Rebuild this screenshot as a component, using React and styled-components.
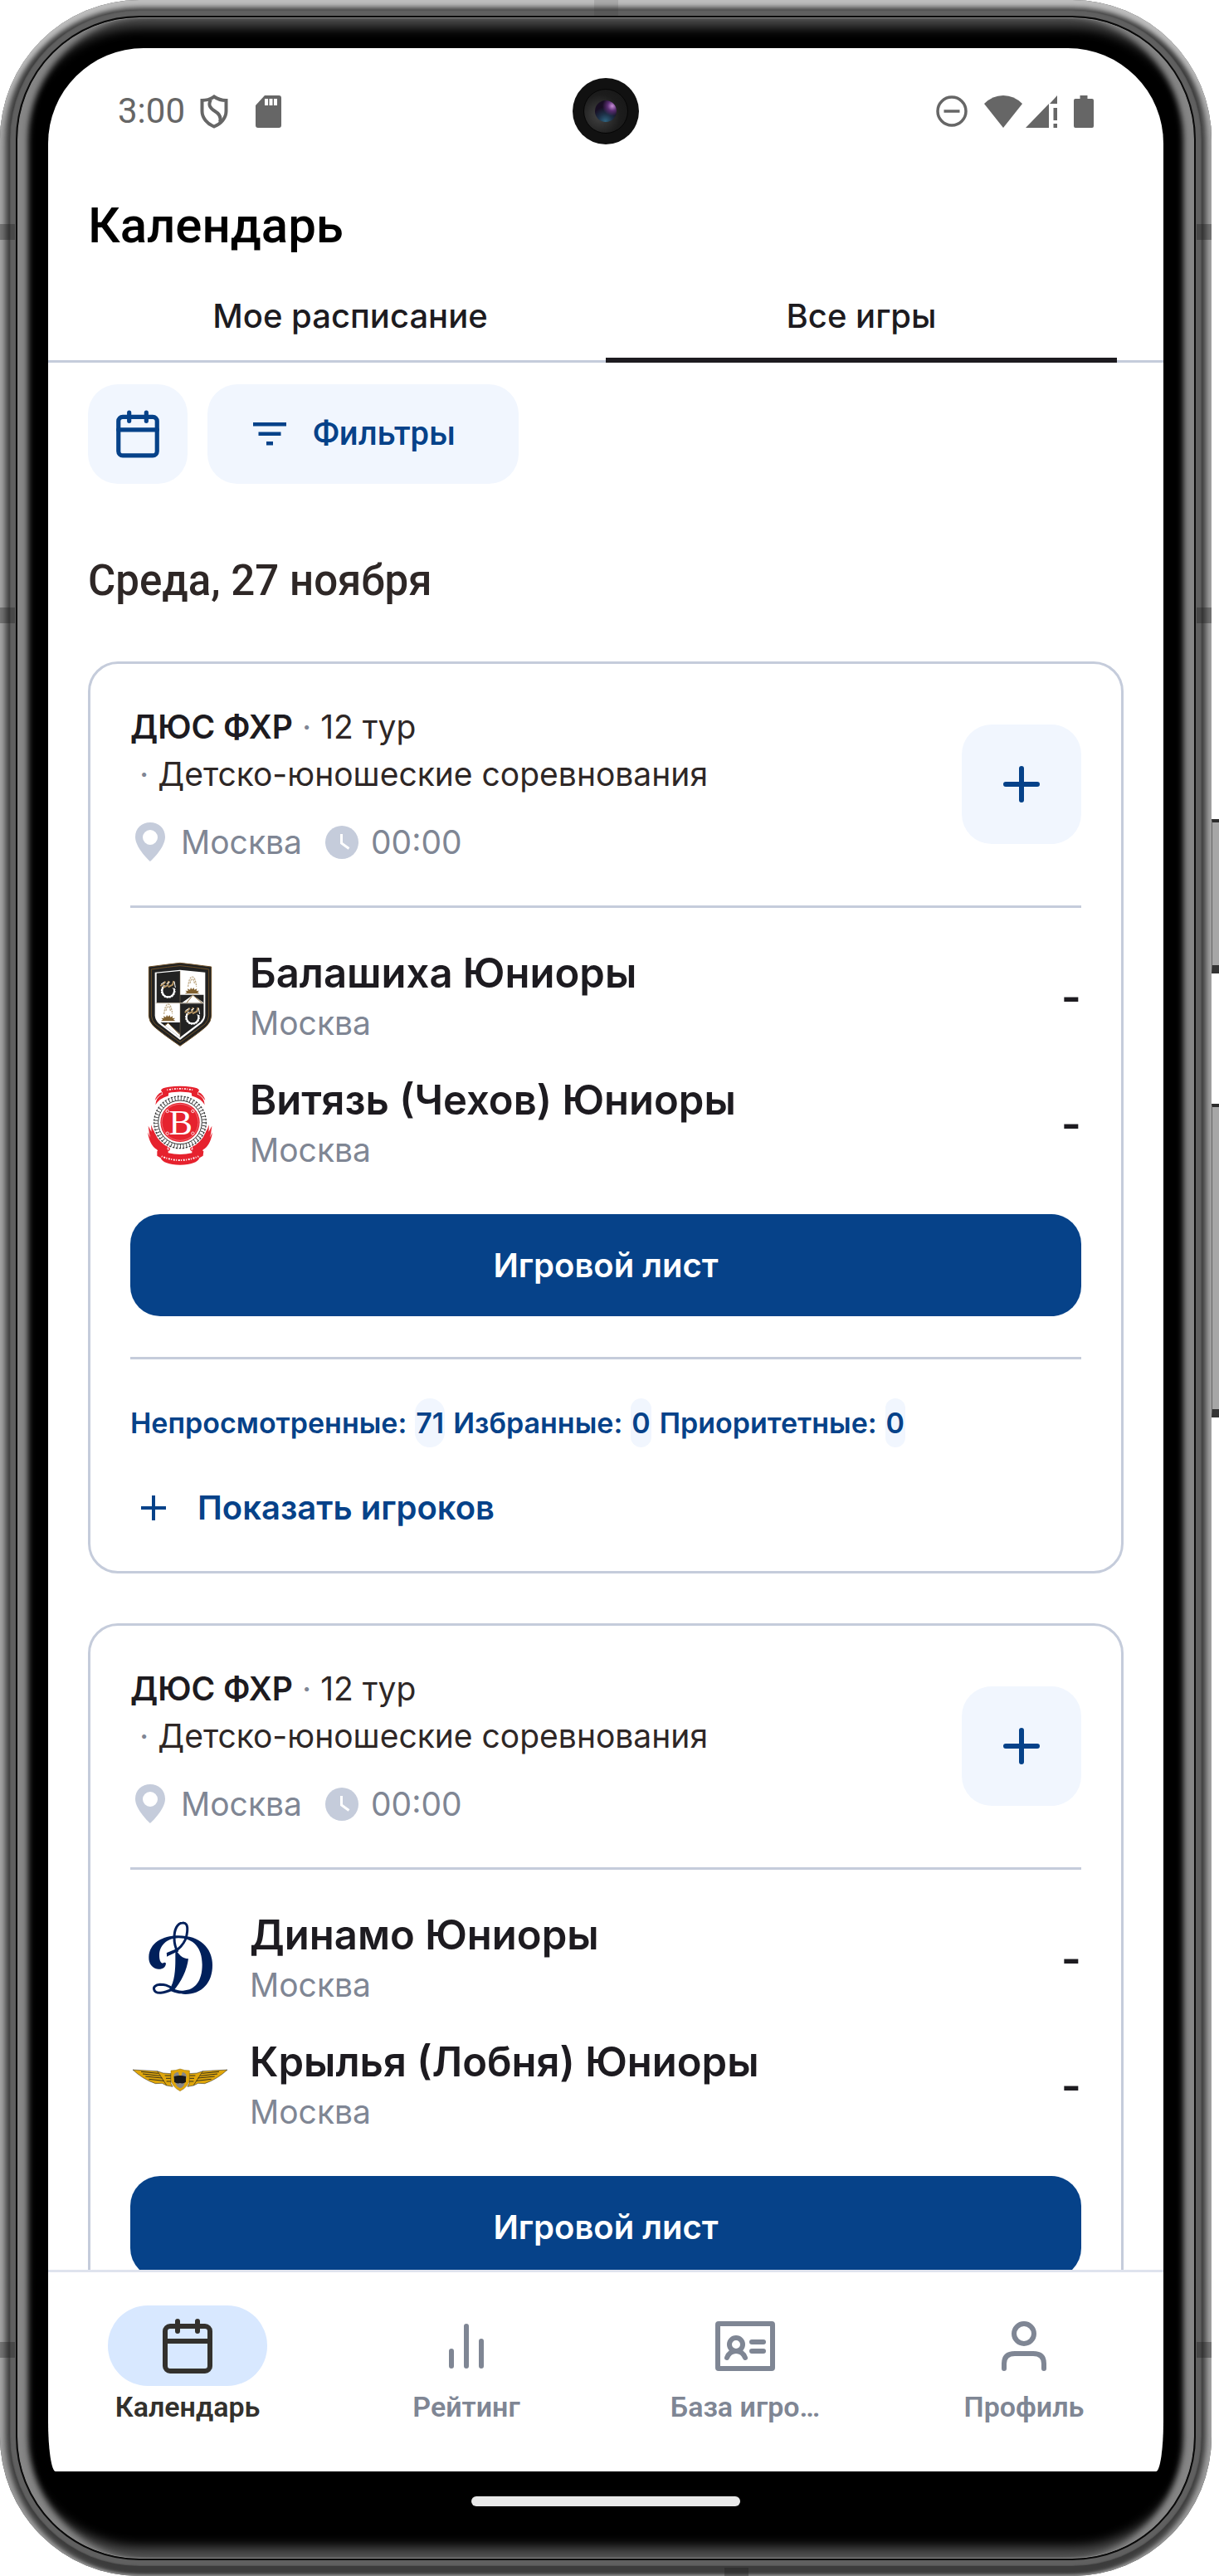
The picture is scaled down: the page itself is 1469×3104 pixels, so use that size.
import React from "react";
import styled, { createGlobalStyle } from "styled-components";

const color = {
  ink: "#1d1b20",
  text: "#2e2726",
  muted: "#7f8694",
  line: "#c5ccdb",
  tint: "#f1f6fe",
  brand: "#064289",
  status: "#666666",
};

const GlobalStyle = createGlobalStyle`
  *, *::before, *::after { box-sizing: border-box; }
  body { margin: 0; background: #fff; font-family: Inter, Roboto, sans-serif; color: ${color.ink}; }
  button { font: inherit; color: inherit; border: 0; padding: 0; background: none; cursor: pointer; }
  h1, h2, p { margin: 0; }
  svg { display: block; flex: none; }
`;

/* ---------- device ---------- */

const Device = styled.div`
  display: flex;
  height: 100vh;
`;

const Rim = styled.div`
  position: relative;
  flex: 1;
  min-width: 0;
  display: flex;
  padding: 12px;
  border-radius: 168px;
  background: #3c3c3c;
  box-shadow: inset 0 11px 6px -2px #bdbdbd, inset 9px 0 6px -2px #9c9c9c, inset -9px 0 6px -2px #9c9c9c, inset 0 -2px 3px #777;
`;

const Band = styled.div`
  flex: 1;
  min-width: 0;
  display: flex;
  padding: 7px;
  border-radius: 156px;
  background: #606060;
  box-shadow: inset 0 0 2px 0 #3a3a3a;
`;

const Bezel = styled.div`
  flex: 1;
  min-width: 0;
  display: flex;
  flex-direction: column;
  padding: 37px 37px 0;
  border: 2px solid #0a0a0a;
  border-radius: 149px;
  background: #000;
  box-shadow: inset 0 0 0 1px #858585, inset 16px 0 7px -3px #868686, inset -16px 0 7px -3px #868686,
    inset 0 12px 14px #4a4a4a, inset 0 -14px 14px #505050;
`;

const isUpright = (side) => side === "left" || side === "right";

const Antenna = styled.span`
  position: absolute;
  ${(p) => p.$side}: 0;
  ${(p) => (isUpright(p.$side) ? "top" : "left")}: ${(p) => p.$at}px;
  width: ${(p) => (isUpright(p.$side) ? 18 : 29)}px;
  height: ${(p) => (p.$side === "bottom" ? 10 : 19)}px;
  background: rgba(30, 30, 30, ${(p) => (p.$side === "top" ? 0.12 : 0.35)});
`;

const KeyRail = styled.div`
  width: 9px;
  display: flex;
  flex-direction: column;
  gap: 157px;
  padding-top: 987px;
`;

const Key = styled.div`
  height: ${(p) => p.$length}px;
  background: #a6a6a6;
  border-top: 4px solid #2c2c2c;
  border-bottom: 10px solid #333;
  border-left: 1px solid #666;
`;

const Screen = styled.div`
  flex: 1;
  min-height: 0;
  display: flex;
  flex-direction: column;
  background: #fff;
  border-radius: 115px 115px 9px 9px / 115px 115px 60px 60px;
  overflow: hidden;
`;

const GestureArea = styled.div`
  height: 105px;
  display: flex;
  justify-content: center;
  padding-top: 30px;
`;

const HomeBar = styled.div`
  width: 324px;
  height: 12px;
  border-radius: 6px;
  background: #e9e9e9;
`;

/* ---------- status bar ---------- */

const StatusBar = styled.div`
  height: 152px;
  display: grid;
  grid-template-columns: 1fr auto 1fr;
  align-items: center;
  padding: 0 84px;
  color: ${color.status};
`;

const Clock = styled.span`
  margin-right: 18px;
`;

const StatusLeft = styled.div`
  display: flex;
  align-items: center;
  font: 400 42px/48px Roboto, sans-serif;

  svg + svg { margin-left: 33px; }
`;

const StatusRight = styled.div`
  display: flex;
  justify-content: flex-end;
  align-items: center;
  gap: 20px;
`;

const Network = styled.div`
  display: flex;
  gap: 4px;
`;

const Camera = styled.div`
  width: 80px;
  height: 80px;
  border-radius: 50%;
  display: grid;
  place-items: center;
  background: #111;
`;

const Lens = styled.div`
  width: 54px;
  height: 54px;
  border-radius: 50%;
  border: 1px solid #050505;
  display: grid;
  place-items: center;
  background: radial-gradient(circle at 36% 60%, #444 0, #1c1c1c 55%, #151515 100%);

  &::after {
    content: "";
    width: 26px;
    height: 26px;
    border-radius: 50%;
    background: radial-gradient(circle at 80% 26%, #c88fd8 0, #5c2f74 20%, transparent 42%),
      radial-gradient(circle at 48% 96%, #2f6480 0, #1d3148 30%, #170d22 60%);
  }
`;

/* ---------- header ---------- */

const Title = styled.h1`
  padding: 0 48px;
  font: 500 60px/124px Roboto, sans-serif;
  color: #000;
`;

const Tabs = styled.div`
  display: flex;
  padding: 0 56px;
  box-shadow: inset 0 -3px 0 ${color.line};
`;

const Tab = styled.button`
  flex: 1;
  && {
    padding: 17px 0 20px;
    border-bottom: 6px solid ${(p) => (p["aria-selected"] ? color.ink : "transparent")};
    font: 500 40px/60px Inter, sans-serif;
    color: ${color.ink};
  }
`;

const Scroll = styled.main`
  flex: 1 1 0;
  min-height: 0;
  overflow: hidden;
  padding: 26px 48px 0;
`;

const Toolbar = styled.div`
  display: flex;
  gap: 24px;
`;

const SoftButton = styled.button`
  && {
    height: ${(p) => p.$size}px;
    min-width: ${(p) => p.$size}px;
    flex: none;
    display: flex;
    align-items: center;
    justify-content: center;
    gap: 32px;
    padding: ${(p) => (p.$wide ? "0 76px 0 55px" : "0")};
    border-radius: 36px;
    background: ${color.tint};
    color: ${color.brand};
    font: 500 40px/48px Roboto, sans-serif;
  }
`;

const DateTitle = styled.h2`
  margin: 87px 0 67px;
  font: 500 51px/60px Roboto, sans-serif;
  color: ${color.text};
`;

/* ---------- match card ---------- */

const List = styled.div`
  display: flex;
  flex-direction: column;
  gap: 60px;
`;

const Card = styled.article`
  padding: 47px 48px;
  border: 3px solid ${color.line};
  border-radius: 36px;
`;

const CardHead = styled.header`
  display: flex;
  align-items: center;
  justify-content: space-between;
  padding-bottom: 48px;
  border-bottom: 3px solid ${color.line};
`;

const Meta = styled.p`
  font-size: 39px;
  line-height: 57px;
  color: ${color.text};
  white-space: pre;
`;

const League = styled.strong`
  font-weight: 600;
  color: ${color.ink};
`;

const Dot = styled.span`
  color: ${color.muted};
`;

const Place = styled.div`
  display: flex;
  align-items: center;
  margin-top: 25px;
  font-size: 39px;
  line-height: 57px;
  color: ${color.muted};

  svg { margin-right: 11px; }
  span { margin-right: 24px; }
`;

const Teams = styled.div`
  display: flex;
  flex-direction: column;
  gap: 23px;
  padding: 46px 0 40px;
`;

const Team = styled.div`
  display: flex;
  align-items: center;
  gap: 24px;
  height: 130px;
`;

const TeamInfo = styled.div`
  flex: 1;
  align-self: flex-start;
`;

const TeamName = styled.p`
  font-size: 49px;
  line-height: 66px;
  font-weight: 600;
`;

const City = styled.p`
  font-size: 39px;
  line-height: 54px;
  color: ${color.muted};
`;

const Score = styled.span`
  padding-bottom: 8px;
  font-size: 52px;
  font-weight: 600;
`;

const SheetButton = styled.button`
  && {
    width: 100%;
    height: 123px;
    border-radius: 36px;
    background: ${color.brand};
    color: #fff;
    font-size: 40px;
    font-weight: 600;
  }
`;

const CardFoot = styled.footer`
  margin-top: 49px;
  padding-top: 47px;
  border-top: 3px solid ${color.line};
`;

const Stats = styled.p`
  display: flex;
  gap: 10px;
  font-size: 34px;
  line-height: 59px;
  font-weight: 600;
  color: ${color.brand};
`;

const Count = styled.span`
  padding: 0 1px;
  border-radius: 18px;
  background: ${color.tint};
`;

const ShowPlayers = styled.button`
  && {
    display: flex;
    align-items: center;
    gap: 31px;
    margin-top: 44px;
    padding-left: 6px;
    font-size: 40px;
    line-height: 58px;
    font-weight: 600;
    color: ${color.brand};
  }
`;

/* ---------- bottom navigation ---------- */

const Nav = styled.nav`
  display: flex;
  height: 243px;
  border-top: 3px solid #dfe3ee;
`;

const NavItem = styled.button`
  && {
    flex: 1;
    display: flex;
    flex-direction: column;
    align-items: center;
    padding-top: 40px;
    font: 600 34px/50px Roboto, sans-serif;
    color: ${(p) => (p.$active ? "#33312d" : color.muted)};
  }
`;

const Pill = styled.span`
  width: 192px;
  height: 97px;
  border-radius: 48px;
  display: grid;
  place-items: center;
  background: ${(p) => (p.$active ? "#d8e8ff" : "transparent")};
`;

/* ---------- icons ---------- */

const CalendarIcon = ({ size }) => (
  <svg width={size} height={size} viewBox="0 0 24 24" fill="none" stroke="currentColor" strokeWidth="2" strokeLinecap="round" strokeLinejoin="round">
    <rect x="3" y="4" width="18" height="18" rx="2" />
    <path d="M8 2v4M16 2v4M3 10h18" />
  </svg>
);

const FilterIcon = () => (
  <svg width="40" height="28" viewBox="0 0 40 28" fill="currentColor">
    <path d="M0 0h40v4.500H0zM6.500 11.500h27V16h-27zM16 23h8v4.500h-8z" />
  </svg>
);

const PlusIcon = ({ size, weight }) => (
  <svg width={size} height={size} viewBox={`0 0 ${size} ${size}`} stroke="currentColor" strokeWidth={weight} strokeLinecap={weight > 4 ? "round" : "butt"}>
    <path d={`M${size / 2} 7V${size - 7}M7 ${size / 2}H${size - 7}`} />
  </svg>
);

const PinIcon = () => (
  <svg width="50" height="57" viewBox="0 0 50 57" fill={color.line}>
    <path fillRule="evenodd" d="M24 5C14 5 6 12 6 22.500C6 36 24 52 24 52S42 36 42 22.500C42 12 34 5 24 5ZM24 14a9 9 0 1 1 0 18a9 9 0 0 1 0-18Z" />
  </svg>
);

const ClockIcon = () => (
  <svg width="48" height="52" viewBox="0 0 48 52">
    <circle cx="24" cy="26" r="20" fill={color.line} />
    <path d="M23.500 16v11l9 6.500" fill="none" stroke="#fff" strokeWidth="3" />
  </svg>
);

const PrivacyIcon = () => (
  <svg width="34" height="41" viewBox="0 0 34 41" fill="none" stroke="currentColor" strokeWidth="4">
    <path d="M17 2.500C12 6 7 7 2.500 7v13c0 8 6 15 14.500 18.500C25.500 35 31.500 28 31.500 20V7C27 7 22 6 17 2.500Z" />
    <path d="M13 6c-4 7 0 11 5 14s8 7 6 13" />
  </svg>
);

const SdIcon = () => (
  <svg width="31" height="39" viewBox="0 0 31 39">
    <path d="M11 0h17q3 0 3 3v33q0 3-3 3H3q-3 0-3-3V12Z" fill="currentColor" />
    <path d="M11 4h4v8h-4zM16.500 4h4v8h-4zM22 4h4v8h-4z" fill="#fff" />
  </svg>
);

const DndIcon = () => (
  <svg width="38" height="38" viewBox="0 0 38 38" fill="none" stroke="currentColor" strokeWidth="3.500">
    <circle cx="19" cy="19" r="17" />
    <path d="M9.500 19h19" />
  </svg>
);

const WifiIcon = () => (
  <svg width="46" height="39" viewBox="0 0 46 39" fill="currentColor">
    <path d="M0 10Q10 0 23 0T46 10L23 39Z" />
  </svg>
);

const SignalIcon = () => (
  <svg width="38" height="39" viewBox="0 0 38 39" fill="currentColor">
    <path d="M28 10V39H0ZM38 0V10H29ZM33.500 15H38V30H33.500ZM33.500 34H38V39H33.500Z" />
  </svg>
);

const BatteryIcon = () => (
  <svg width="24" height="39" viewBox="0 0 24 39" fill="currentColor">
    <path d="M7.500 0h9v4H22q2 0 2 2v31q0 2-2 2H2q-2 0-2-2V6q0-2 2-2h5.500Z" />
  </svg>
);

const BarsIcon = () => (
  <svg width="72" height="72" viewBox="0 0 72 72" fill="none" stroke="currentColor" strokeWidth="6" strokeLinecap="round">
    <path d="M18 42V60M36 12V60M54 30V60" />
  </svg>
);

const IdIcon = () => (
  <svg width="72" height="72" viewBox="0 0 72 72" fill="none" stroke="currentColor" strokeWidth="6" strokeLinecap="round" strokeLinejoin="round">
    <rect x="3" y="9" width="66" height="54" rx="1" />
    <circle cx="25" cy="34" r="8" />
    <path d="M14 50q3-8 11-8t11 8M44 31h14M44 42h14" />
  </svg>
);

const ProfileIcon = () => (
  <svg width="72" height="72" viewBox="0 0 72 72" fill="none" stroke="currentColor" strokeWidth="6" strokeLinecap="round">
    <circle cx="36" cy="21" r="12" />
    <path d="M12 63V57Q12 45 25 45H47Q60 45 60 57V63" />
  </svg>
);

/* ---------- club crests ---------- */

const Gear = ({ x, y }) => (
  <g transform={`translate(${x} ${y})`} fill="none">
    <circle r="23" stroke="#fff" strokeWidth="7" strokeDasharray="6 3" />
    <circle r="22" stroke="#fff" strokeWidth="6" />
    <path d="M-26-24L24-32L27-8L10-12Z" fill="#222" />
    <path d="M-28-18L-16-26L-10-34M-18-12L-2-20L2-36M0-14L16-22L20-36" stroke="#b89664" strokeWidth="6" />
    <path d="M-26-24L-14-32M-6-26L6-32M22-34L26-12" stroke="#fff" strokeWidth="3" />
  </g>
);

const Dawn = ({ x, y }) => (
  <g transform={`translate(${x} ${y})`}>
    <path d="M-15-28Q-12-62 0-64Q12-62 15-28M-8-40Q-6-54 0-56Q6-54 8-40" fill="none" stroke="#b9a27c" strokeWidth="3.500" strokeDasharray="7 3" />
    <path d="M-27-3L-19-8L-25-14L-15-13L-17-21L-8-17L-5-25L0-18L5-25L8-17L17-21L15-13L25-14L19-8L27-3Z" fill="#80602f" />
  </g>
);

const BalashikhaCrest = () => (
  <svg width="120" height="120" viewBox="21 -3 360 360">
    <defs>
      <clipPath id="balashikha-field">
        <path d="M115 80L201 72L287 80V232Q286 245 275 256L201 312L127 256Q115 245 115 232Z" />
      </clipPath>
    </defs>
    <path d="M88 57Q165 47 201 43Q237 47 314 57V235Q312 256 298 270Q275 292 201 343Q127 292 104 270Q90 256 88 235Z" fill="#222" stroke="#6e5128" strokeWidth="3" />
    <path d="M97 66Q160 57 201 53Q242 57 305 66V234Q303 252 291 264L201 330L111 264Q99 252 97 234Z" fill="none" stroke="#6e5128" strokeWidth="3" />
    <path d="M110 77L201 68L292 77V234Q290 250 279 261L201 321L123 261Q112 250 110 234Z" fill="#fff" />
    <g clipPath="url(#balashikha-field)">
      <path d="M115 70H201V187H115ZM201 158H290V187H201ZM201 190H290V320H201ZM113 258H201V320H113Z" fill="#222" />
      <path d="M247 159L286 187H208ZM158 260L201 300V314L140 276Z" fill="#fff" />
      <path d="M247 159L225 187M247 159L280 187M158 260L130 280M158 260L200 302" stroke="#8a6a38" strokeWidth="3" />
      <Gear x={158} y={144} />
      <Gear x={246} y={240} />
      <Dawn x={245} y={157} />
      <Dawn x={158} y={256} />
    </g>
    <path d="M113 188H288M201 72V314" stroke="#8d7a5c" strokeWidth="1.500" />
  </svg>
);

const VityazRibbon = () => (
  <g fill="#e6222e">
    <path d="M84 655Q98 690 130 705L126 722Q92 710 84 655ZM86 632Q105 672 134 690L148 716L122 724Q90 690 86 632ZM96 628Q106 660 132 678L158 700L150 738L126 726Q96 690 96 628Z" />
    <path d="M112 556Q114 530 134 520L158 514L156 524Q126 532 112 556ZM110 540Q116 518 134 510L136 516Q120 524 110 540Z" />
  </g>
);

const VityazCrest = () => (
  <svg width="120" height="120" viewBox="21 456 360 360">
    <VityazRibbon />
    <g transform="matrix(-1 0 0 1 402 0)">
      <VityazRibbon />
    </g>
    <circle cx="201" cy="619" r="99" fill="#fff" />
    <circle cx="201" cy="619" r="94" fill="none" stroke="#333" strokeWidth="4" strokeDasharray="7 5" />
    <circle cx="201" cy="619" r="79" fill="#fff" stroke="#333" strokeWidth="3" />
    <circle cx="201" cy="619" r="86" fill="none" stroke="#444" strokeWidth="12" strokeDasharray="3 8" />
    <circle cx="201" cy="619" r="71" fill="#e6222e" />
    <circle cx="201" cy="619" r="66" fill="none" stroke="#f8b5b9" strokeWidth="1.500" />
    <g fill="none" stroke="#fff" strokeWidth="2.500">
      <circle cx="155" cy="579" r="5" />
      <circle cx="247" cy="579" r="5" />
      <circle cx="155" cy="659" r="5" />
      <circle cx="247" cy="659" r="5" />
    </g>
    <text x="203" y="662" textAnchor="middle" fontFamily="Liberation Serif, serif" fontWeight="400" fontSize="128" fill="#fff">В</text>
    <path d="M132 503Q134 494 160 491Q201 486 242 491Q268 494 270 503L262 517Q201 500 140 517Z" fill="#e6222e" />
    <path d="M136 514L160 512L158 524L142 524ZM266 514L242 512L244 524L260 524Z" fill="#e6222e" />
    <path d="M154 502Q201 493 248 502" fill="none" stroke="#fff" strokeWidth="5" strokeDasharray="3 5 6 4" />
    <path d="M118 724L132 712L158 718V730Q201 740 244 730V718L270 712L286 724L284 740L271 748Q262 772 201 773Q140 772 131 748L118 740Z" fill="#e6222e" />
    <path d="M134 742Q201 770 268 742" fill="none" stroke="#fff" strokeWidth="6" strokeDasharray="3 5 6 4" />
    <path d="M158 722Q168 716 158 710M244 722Q234 716 244 710" fill="none" stroke="#e6222e" strokeWidth="4" />
  </svg>
);

const DynamoCrest = () => (
  <svg width="120" height="120" viewBox="21 36 360 360" fill="#00205b">
    <path d="M150 221C149 235 138 243 122 242C100 240 87 222 88 198C90 150 135 121 195 121C272 121 318 165 318 228C318 292 280 332 220 333C198 333 184 328 168 322L176 313C190 319 200 321 212 320C256 318 281 285 281 226C281 166 250 130 195 130C150 131 126 160 126 192C126 208 130 220 138 221Q146 216 150 221Z" />
    <path d="M184 168C194 188 210 205 231 205C226 245 205 290 176 322L162 316C182 290 184 240 184 210Z" />
    <path d="M153 189C192 180 224 150 227 105C229 82 222 74 210 75C190 76 180 100 180 130C180 150 184 165 192 180" fill="none" stroke="#00205b" strokeWidth="9" />
    <path d="M153 183L190 168L186 180L153 197Z" />
    <path d="M176 316C158 298 142 298 128 298C112 299 104 308 107 316C112 334 145 330 174 314" fill="none" stroke="#00205b" strokeWidth="9" />
  </svg>
);

const Wing = () => (
  <g>
    <path d="M30 606L119 611L140 618L168 620V656L174 667L152 663L136 655L112 656Q66 640 30 606Z" fill="#e0a60a" stroke="#151a22" strokeWidth="1.500" />
    <path d="M60 613L122 619M66 621L128 628M76 630L136 636M88 640L142 646M146 627H168M150 637H168M152 648H168" stroke="#151a22" strokeWidth="2.500" />
    <path d="M119 611L152 662" stroke="#151a22" strokeWidth="2" />
  </g>
);

const WingsCrest = () => (
  <svg width="120" height="120" viewBox="21 495 360 360">
    <Wing />
    <g transform="matrix(-1 0 0 1 402 0)">
      <Wing />
    </g>
    <path d="M168 609Q186 609 201 603Q217 609 235 609V640Q234 666 201 683Q169 666 168 640Z" fill="#e0a60a" stroke="#8a6a10" strokeWidth="1.500" />
    <path d="M178 634Q176 616 194 614L199 628H205L210 614Q226 618 224 634L218 654Q212 672 201 672Q190 670 184 654Z" fill="#878787" />
    <path d="M179 630Q201 624 222 630V650Q212 658 201 654Q190 658 180 650Z" fill="#181818" />
  </svg>
);

/* ---------- content ---------- */

const matches = [
  {
    teams: [
      { name: "Балашиха Юниоры", Crest: BalashikhaCrest },
      { name: "Витязь (Чехов) Юниоры", Crest: VityazCrest },
    ],
    stats: { unseen: 71, favourite: 0, priority: 0 },
  },
  {
    teams: [
      { name: "Динамо Юниоры", Crest: DynamoCrest },
      { name: "Крылья (Лобня) Юниоры", Crest: WingsCrest },
    ],
  },
];

const navItems = [
  { label: "Календарь", icon: <CalendarIcon size={72} />, active: true },
  { label: "Рейтинг", icon: <BarsIcon /> },
  { label: "База игро…", icon: <IdIcon /> },
  { label: "Профиль", icon: <ProfileIcon /> },
];

const MatchCard = ({ teams, stats }) => (
  <Card>
    <CardHead>
      <div>
        <Meta><League>ДЮС ФХР</League><Dot> · </Dot>12 тур</Meta>
        <Meta><Dot> · </Dot>Детско-юношеские соревнования</Meta>
        <Place>
          <PinIcon />
          <span>Москва</span>
          <ClockIcon />
          <span>00:00</span>
        </Place>
      </div>
      <SoftButton $size={144} aria-label="Добавить">
        <PlusIcon size={52} weight={6} />
      </SoftButton>
    </CardHead>
    <Teams>
      {teams.map(({ name, Crest }) => (
        <Team key={name}>
          <Crest />
          <TeamInfo>
            <TeamName>{name}</TeamName>
            <City>Москва</City>
          </TeamInfo>
          <Score>-</Score>
        </Team>
      ))}
    </Teams>
    <SheetButton>Игровой лист</SheetButton>
    {stats && (
      <CardFoot>
        <Stats>
          Непросмотренные: <Count>{stats.unseen}</Count> Избранные: <Count>{stats.favourite}</Count> Приоритетные:{" "}
          <Count>{stats.priority}</Count>
        </Stats>
        <ShowPlayers>
          <PlusIcon size={44} weight={4} />
          Показать игроков
        </ShowPlayers>
      </CardFoot>
    )}
  </Card>
);

export default function App() {
  return (
    <>
      <GlobalStyle />
      <Device>
        <Rim>
          <Band>
            <Bezel>
              <Screen>
                <StatusBar>
                  <StatusLeft>
                    <Clock>3:00</Clock>
                    <PrivacyIcon />
                    <SdIcon />
                  </StatusLeft>
                  <Camera><Lens /></Camera>
                  <StatusRight>
                    <DndIcon />
                    <Network>
                      <WifiIcon />
                      <SignalIcon />
                    </Network>
                    <BatteryIcon />
                  </StatusRight>
                </StatusBar>
                <Title>Календарь</Title>
                <Tabs role="tablist">
                  <Tab role="tab" aria-selected={false}>Мое расписание</Tab>
                  <Tab role="tab" aria-selected={true}>Все игры</Tab>
                </Tabs>
                <Scroll>
                  <Toolbar>
                    <SoftButton $size={120} aria-label="Выбрать дату"><CalendarIcon size={62} /></SoftButton>
                    <SoftButton $size={120} $wide><FilterIcon />Фильтры</SoftButton>
                  </Toolbar>
                  <DateTitle>Среда, 27 ноября</DateTitle>
                  <List>
                    {matches.map((m) => (
                      <MatchCard key={m.teams[0].name} teams={m.teams} stats={m.stats} />
                    ))}
                  </List>
                </Scroll>
                <Nav>
                  {navItems.map((n) => (
                    <NavItem key={n.label} $active={n.active}>
                      <Pill $active={n.active}>{n.icon}</Pill>
                      {n.label}
                    </NavItem>
                  ))}
                </Nav>
              </Screen>
              <GestureArea><HomeBar /></GestureArea>
            </Bezel>
          </Band>
          <Antenna $side="left" $at={270} />
          <Antenna $side="right" $at={270} />
          <Antenna $side="left" $at={732} />
          <Antenna $side="right" $at={732} />
          <Antenna $side="left" $at={2822} />
          <Antenna $side="right" $at={2822} />
          <Antenna $side="top" $at={716} />
          <Antenna $side="bottom" $at={873} />
        </Rim>
        <KeyRail>
          <Key $length={186} />
          <Key $length={378} />
        </KeyRail>
      </Device>
    </>
  );
}
